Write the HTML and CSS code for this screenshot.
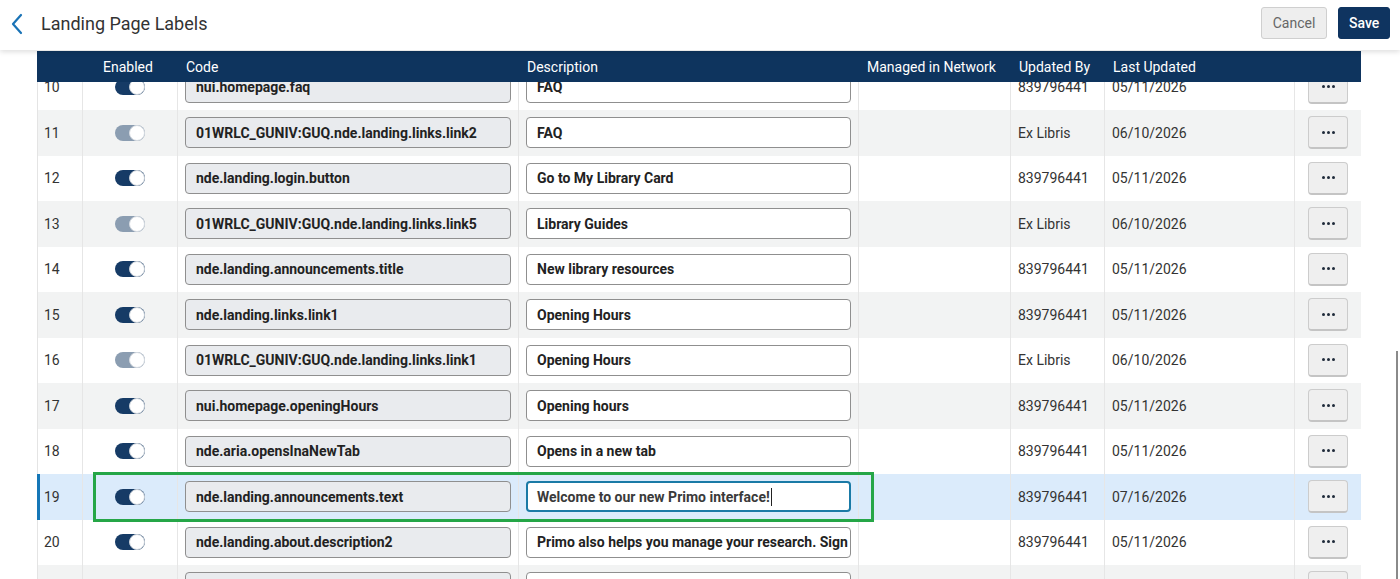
FILE: index.html
```html
<!DOCTYPE html>
<html lang="en">
<head>
<meta charset="utf-8">
<title>Landing Page Labels</title>
<link rel="stylesheet" href="styles.css">
</head>
<body>
<div class="page">
  <header class="topbar">
    <div class="title-group">
      <svg class="back" width="14" height="22" viewBox="0 0 14 22" aria-hidden="true"><path d="M11 2 L3 11 L11 20" fill="none" stroke="#1a73b6" stroke-width="2.2" stroke-linecap="round" stroke-linejoin="round"/></svg>
      <h1 class="title">Landing Page Labels</h1>
    </div>
    <div class="top-actions">
      <button class="btn btn-cancel">Cancel</button>
      <button class="btn btn-save">Save</button>
    </div>
  </header>

  <main class="content">
    <div class="table">
      <div class="row thead">
        <div class="hc"></div>
        <div class="hc center">Enabled</div>
        <div class="hc">Code</div>
        <div class="hc">Description</div>
        <div class="hc">Managed in Network</div>
        <div class="hc">Updated By</div>
        <div class="hc">Last Updated</div>
        <div class="hc"></div>
      </div>
      <div class="viewport">
        <div class="tbody">

          <div class="row">
            <div class="c num">10</div>
            <div class="c center"><span class="toggle on"></span></div>
            <div class="c"><div class="field code">nui.homepage.faq</div></div>
            <div class="c"><div class="field desc">FAQ</div></div>
            <div class="c"></div>
            <div class="c">839796441</div>
            <div class="c">05/11/2026</div>
            <div class="c center"><span class="more"><i></i><i></i><i></i></span></div>
          </div>

          <div class="row alt">
            <div class="c num">11</div>
            <div class="c center"><span class="toggle off"></span></div>
            <div class="c"><div class="field code">01WRLC_GUNIV:GUQ.nde.landing.links.link2</div></div>
            <div class="c"><div class="field desc">FAQ</div></div>
            <div class="c"></div>
            <div class="c">Ex Libris</div>
            <div class="c">06/10/2026</div>
            <div class="c center"><span class="more"><i></i><i></i><i></i></span></div>
          </div>

          <div class="row">
            <div class="c num">12</div>
            <div class="c center"><span class="toggle on"></span></div>
            <div class="c"><div class="field code">nde.landing.login.button</div></div>
            <div class="c"><div class="field desc">Go to My Library Card</div></div>
            <div class="c"></div>
            <div class="c">839796441</div>
            <div class="c">05/11/2026</div>
            <div class="c center"><span class="more"><i></i><i></i><i></i></span></div>
          </div>

          <div class="row alt">
            <div class="c num">13</div>
            <div class="c center"><span class="toggle off"></span></div>
            <div class="c"><div class="field code">01WRLC_GUNIV:GUQ.nde.landing.links.link5</div></div>
            <div class="c"><div class="field desc">Library Guides</div></div>
            <div class="c"></div>
            <div class="c">Ex Libris</div>
            <div class="c">06/10/2026</div>
            <div class="c center"><span class="more"><i></i><i></i><i></i></span></div>
          </div>

          <div class="row">
            <div class="c num">14</div>
            <div class="c center"><span class="toggle on"></span></div>
            <div class="c"><div class="field code">nde.landing.announcements.title</div></div>
            <div class="c"><div class="field desc">New library resources</div></div>
            <div class="c"></div>
            <div class="c">839796441</div>
            <div class="c">05/11/2026</div>
            <div class="c center"><span class="more"><i></i><i></i><i></i></span></div>
          </div>

          <div class="row alt">
            <div class="c num">15</div>
            <div class="c center"><span class="toggle on"></span></div>
            <div class="c"><div class="field code">nde.landing.links.link1</div></div>
            <div class="c"><div class="field desc">Opening Hours</div></div>
            <div class="c"></div>
            <div class="c">839796441</div>
            <div class="c">05/11/2026</div>
            <div class="c center"><span class="more"><i></i><i></i><i></i></span></div>
          </div>

          <div class="row">
            <div class="c num">16</div>
            <div class="c center"><span class="toggle off"></span></div>
            <div class="c"><div class="field code">01WRLC_GUNIV:GUQ.nde.landing.links.link1</div></div>
            <div class="c"><div class="field desc">Opening Hours</div></div>
            <div class="c"></div>
            <div class="c">Ex Libris</div>
            <div class="c">06/10/2026</div>
            <div class="c center"><span class="more"><i></i><i></i><i></i></span></div>
          </div>

          <div class="row alt">
            <div class="c num">17</div>
            <div class="c center"><span class="toggle on"></span></div>
            <div class="c"><div class="field code">nui.homepage.openingHours</div></div>
            <div class="c"><div class="field desc">Opening hours</div></div>
            <div class="c"></div>
            <div class="c">839796441</div>
            <div class="c">05/11/2026</div>
            <div class="c center"><span class="more"><i></i><i></i><i></i></span></div>
          </div>

          <div class="row">
            <div class="c num">18</div>
            <div class="c center"><span class="toggle on"></span></div>
            <div class="c"><div class="field code">nde.aria.opensInaNewTab</div></div>
            <div class="c"><div class="field desc">Opens in a new tab</div></div>
            <div class="c"></div>
            <div class="c">839796441</div>
            <div class="c">05/11/2026</div>
            <div class="c center"><span class="more"><i></i><i></i><i></i></span></div>
          </div>

          <div class="row selected">
            <div class="c num">19</div>
            <div class="c center"><span class="toggle on"></span></div>
            <div class="c"><div class="field code">nde.landing.announcements.text</div></div>
            <div class="c"><div class="field desc focused">Welcome to our new Primo interface!<span class="caret"></span></div></div>
            <div class="c"></div>
            <div class="c">839796441</div>
            <div class="c">07/16/2026</div>
            <div class="c center"><span class="more"><i></i><i></i><i></i></span></div>
          </div>

          <div class="row">
            <div class="c num">20</div>
            <div class="c center"><span class="toggle on"></span></div>
            <div class="c"><div class="field code">nde.landing.about.description2</div></div>
            <div class="c"><div class="field desc">Primo also helps you manage your research. Sign in to save items</div></div>
            <div class="c"></div>
            <div class="c">839796441</div>
            <div class="c">05/11/2026</div>
            <div class="c center"><span class="more"><i></i><i></i><i></i></span></div>
          </div>

          <div class="row alt">
            <div class="c num">21</div>
            <div class="c center"><span class="toggle on"></span></div>
            <div class="c"><div class="field code">nde.landing.about.title</div></div>
            <div class="c"><div class="field desc">About</div></div>
            <div class="c"></div>
            <div class="c">839796441</div>
            <div class="c">05/11/2026</div>
            <div class="c center"><span class="more"><i></i><i></i><i></i></span></div>
          </div>

        </div>
      </div>
    </div>
  </main>

  <div class="highlight"></div>
  <div class="scroll-thumb"></div>
</div>
</body>
</html>
```

FILE: styles.css
```css
* { box-sizing: border-box; }

html, body {
  margin: 0;
  padding: 0;
  background: #ffffff;
  font-family: Roboto, "Liberation Sans", Arial, sans-serif;
  color: #333333;
  overflow: hidden;
}

.page {
  position: relative;
  width: 1400px;
  height: 579px;
  overflow: hidden;
  display: flex;
  flex-direction: column;
}

/* ---------- top bar ---------- */
.topbar {
  position: relative;
  z-index: 2;
  height: 50px;
  flex: 0 0 50px;
  display: flex;
  align-items: center;
  justify-content: space-between;
  padding: 0 10px 0 10px;
  background: #ffffff;
  box-shadow: 0 2px 5px rgba(0, 0, 0, 0.13);
}

.title-group {
  display: flex;
  align-items: center;
  gap: 17px;
}

.back { display: block; margin-top: -2px; }

.title {
  margin: 0;
  font-size: 18px;
  font-weight: 400;
  color: #333333;
  letter-spacing: 0;
  margin-top: -4px;
}

.top-actions {
  display: flex;
  gap: 11px;
  margin-top: -4px;
}

.btn {
  height: 32px;
  border-radius: 3px;
  font-family: Roboto, "Liberation Sans", Arial, sans-serif;
  font-size: 14px;
  padding: 0 10px;
  cursor: pointer;
}

.btn-cancel {
  width: 66px;
  background: #eeeeee;
  border: 1px solid #cfcfcf;
  color: #666666;
}

.btn-save {
  width: 52px;
  background: #0f3460;
  border: 1px solid #0f3460;
  color: #ffffff;
  font-weight: 500;
}

/* ---------- table ---------- */
.content {
  flex: 1 1 auto;
  min-height: 0;
  padding: 1px 0 0 37px;
}

.table {
  width: 1324px;
  height: 100%;
  display: flex;
  flex-direction: column;
}

.row {
  display: grid;
  grid-template-columns: 45px 95px 341px 340px 152px 94px 190px 67px;
  align-items: stretch;
}

.thead {
  height: 31px;
  flex: 0 0 31px;
  background: #0e345e;
  color: #ffffff;
  font-size: 14px;
}

.hc {
  display: flex;
  align-items: center;
  padding: 0 9px;
  white-space: nowrap;
}

.hc.center { justify-content: center; padding: 0 3px 0 0; }

.viewport {
  flex: 1 1 auto;
  min-height: 0;
  overflow: hidden;
}

.tbody {
  margin-top: -17.5px;
}

.tbody .row {
  height: 45.5px;
  background: #ffffff;
  font-size: 14px;
  color: #333333;
  border-left: 1px solid #e4e4e4;
}

.tbody .row.alt { background: #f2f3f3; }

.tbody .row.selected {
  background: #dbebfb;
  border-left-color: #1577b7;
  box-shadow: inset 2px 0 0 #1577b7;
}

.c {
  display: flex;
  align-items: center;
  padding: 0 7px;
  border-right: 1px solid #e6e6e6;
  white-space: nowrap;
  overflow: hidden;
  min-width: 0;
}

.c.num { padding-left: 6px; }
.c.center { justify-content: center; padding: 0; }

/* toggle */
.toggle {
  position: relative;
  display: block;
  width: 30px;
  height: 16px;
  border-radius: 8px;
  background: #163b66;
}

.toggle::after {
  content: "";
  position: absolute;
  right: 0;
  top: 0;
  width: 16px;
  height: 16px;
  border-radius: 50%;
  background: #ffffff;
  border: 1px solid #c9d0d8;
  box-sizing: border-box;
}

.toggle.off { background: #8b9db1; }
.toggle.off::after { border-color: #d6dbe1; }

/* input-like fields */
.field {
  width: 100%;
  height: 31px;
  display: flex;
  align-items: center;
  padding: 0 10px;
  border: 1px solid #8f8f8f;
  border-radius: 4px;
  font-weight: 700;
  font-size: 14px;
  color: #222222;
  white-space: nowrap;
  overflow: hidden;
}

.field.code { background: #e9ebee; }
.field.desc { background: #ffffff; }

.field.focused {
  border: 2px solid #1a7aa6;
  padding-left: 9px;
  color: #3a3a3a;
}

.caret {
  display: inline-block;
  width: 1px;
  height: 18px;
  background: #222222;
  margin-left: 1px;
}

/* more button */
.more {
  width: 40px;
  height: 33px;
  display: flex;
  align-items: center;
  justify-content: center;
  gap: 2px;
  background: #efefef;
  border: 1px solid #cccccc;
  border-bottom: 2px solid #c4c4c4;
  border-radius: 4px;
}

.more i {
  display: block;
  width: 3px;
  height: 3px;
  border-radius: 50%;
  background: #1f2a3a;
}

/* overlays */
.highlight {
  position: absolute;
  left: 93px;
  top: 472px;
  width: 781px;
  height: 50px;
  border: 3px solid #25a647;
  pointer-events: none;
}

.scroll-thumb {
  position: absolute;
  left: 1396px;
  top: 351px;
  width: 2px;
  height: 228px;
  background: #8a8a8a;
}
```
